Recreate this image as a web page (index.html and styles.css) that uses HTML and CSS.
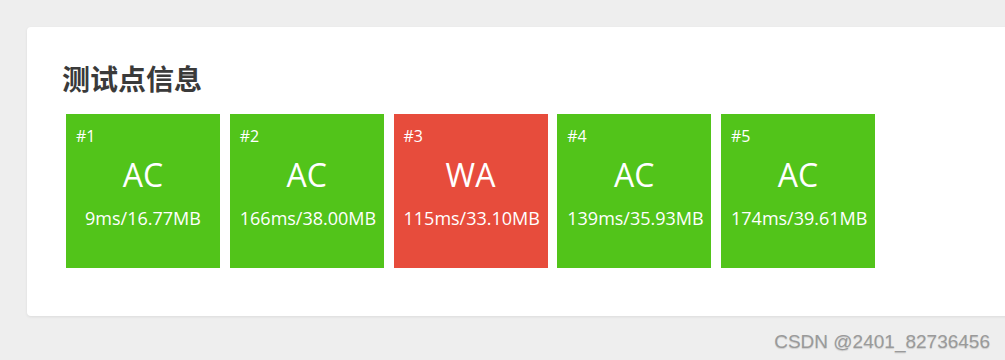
FILE: index.html
```html
<!DOCTYPE html>
<html lang="zh-CN">
<head>
  <meta charset="UTF-8" />
  <title>测试点信息</title>
  <link rel="stylesheet" href="styles.css">
</head>
<body>
  <div class="card">
    <h2 class="title">测试点信息</h2>
    <div class="cases">
      <div class="case ac">
        <div class="num">#1</div>
        <div class="verdict">AC</div>
        <div class="stat">9ms/16.77MB</div>
      </div>
      <div class="case ac">
        <div class="num">#2</div>
        <div class="verdict">AC</div>
        <div class="stat">166ms/38.00MB</div>
      </div>
      <div class="case wa">
        <div class="num">#3</div>
        <div class="verdict">WA</div>
        <div class="stat">115ms/33.10MB</div>
      </div>
      <div class="case ac">
        <div class="num">#4</div>
        <div class="verdict">AC</div>
        <div class="stat">139ms/35.93MB</div>
      </div>
      <div class="case ac">
        <div class="num">#5</div>
        <div class="verdict">AC</div>
        <div class="stat">174ms/39.61MB</div>
      </div>
    </div>
  </div>
  <div class="watermark">CSDN @2401_82736456</div>
</body>
</html>
```

FILE: styles.css
```css
body {
  margin: 0;
  padding: 27px 0 0 27px;
  background: #eeeeee;
  font-family: "Open Sans", "Noto Sans CJK SC", sans-serif;
  overflow: hidden;
  height: 333px;
}
.card {
  width: 1000px;
  height: 289px;
  box-sizing: border-box;
  background: #fff;
  border-radius: 4px;
  box-shadow: 0 1px 3px rgba(0, 0, 0, 0.08);
  padding: 33px 0 0 35px;
}
.title {
  margin: 0;
  font-size: 28px;
  line-height: 36px;
  font-weight: bold;
  color: #3a3a3a;
  font-family: "Noto Sans CJK SC", sans-serif;
}
.cases {
  display: flex;
  gap: 9.75px;
  margin: 18px 0 0 4px;
}
.case {
  width: 154px;
  height: 154px;
  flex-shrink: 0;
  box-sizing: border-box;
  padding: 12px 10px;
  color: #fff;
  display: flex;
  flex-direction: column;
}
.ac { background: #52c41a; }
.wa { background: #e74c3c; }
.num {
  font-size: 16px;
  line-height: 20px;
}
.verdict {
  margin-top: 9px;
  font-size: 32px;
  line-height: 40px;
  text-align: center;
}
.stat {
  margin-top: 12px;
  font-size: 18px;
  line-height: 22px;
  text-align: center;
  white-space: nowrap;
}
.watermark {
  position: absolute;
  right: 15px;
  bottom: 7px;
  font-family: "Liberation Sans", Arial, sans-serif;
  font-size: 19px;
  color: #9a9a9a;
  text-shadow: 0 1px 1px rgba(0, 0, 0, 0.15);
}
```
